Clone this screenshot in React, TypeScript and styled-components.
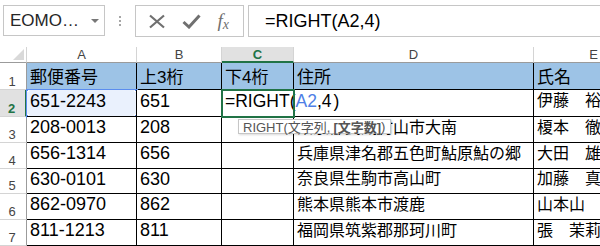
import styled, { createGlobalStyle } from 'styled-components';

const GlobalStyle = createGlobalStyle`
  html, body {
    margin: 0;
    padding: 0;
    background: #fff;
    overflow: hidden;
  }
  body {
    font-family: 'Liberation Sans', 'Noto Sans CJK JP', sans-serif;
  }
`;

type TRow = {
  zip: string;
  head: string;
  address: string;
  name: string;
};

const rows: TRow[] = [
  { zip: '651-2243', head: '651', address: '', name: '伊藤　裕子' },
  { zip: '208-0013', head: '208', address: '東京都武蔵村山市大南', name: '榎本　徹' },
  { zip: '656-1314', head: '656', address: '兵庫県津名郡五色町鮎原鮎の郷', name: '大田　雄一' },
  { zip: '630-0101', head: '630', address: '奈良県生駒市高山町', name: '加藤　真一' },
  { zip: '862-0970', head: '862', address: '熊本県熊本市渡鹿', name: '山本山' },
  { zip: '811-1213', head: '811', address: '福岡県筑紫郡那珂川町', name: '張　茉莉花' },
];

const columns = ['A', 'B', 'C', 'D', 'E'];

const App = () => {
  return (
    <Page>
      <GlobalStyle />
      <Toolbar>
        <NameBox>
          <NameText>EOMO…</NameText>
          <Caret />
        </NameBox>
        <Grip>
          <i />
          <i />
          <i />
        </Grip>
        <FxBox>
          <svg width="18" height="15" viewBox="0 0 18 15">
            <path d="M2 1.5 L16 13.5 M16 1.5 L2 13.5" stroke="#707070" strokeWidth="2.2" fill="none" />
          </svg>
          <svg width="19" height="15" viewBox="0 0 19 15">
            <path d="M1.5 8 L7 13 L17.5 1.5" stroke="#707070" strokeWidth="3" fill="none" strokeLinejoin="miter" />
          </svg>
          <FxLabel>
            f<sub>x</sub>
          </FxLabel>
        </FxBox>
        <FormulaInput>=RIGHT(A2,4)</FormulaInput>
      </Toolbar>

      <Sheet>
        <Corner>
          <svg width="11" height="11" viewBox="0 0 11 11">
            <path d="M11 0 L11 11 L0 11 Z" fill="#d9d9d9" />
          </svg>
        </Corner>
        {columns.map((c) => (
          <ColHead key={c} $active={c === 'C'}>
            {c}
          </ColHead>
        ))}

        <RowHead>1</RowHead>
        <Cell $kind="title">郵便番号</Cell>
        <Cell $kind="title">上3桁</Cell>
        <Cell $kind="title">下4桁</Cell>
        <Cell $kind="title">住所</Cell>
        <Cell $kind="title">氏名</Cell>

        {rows.map((r, i) => {
          const n = i + 2;
          const editing = n === 2;
          return [
            <RowHead key={`h${n}`} $active={editing}>
              {n}
            </RowHead>,
            <Cell key={`a${n}`} $ref={editing}>
              {r.zip}
              {editing && (
                <>
                  <Handle $x="left" $y="top" />
                  <Handle $x="right" $y="top" />
                  <Handle $x="left" $y="bottom" />
                  <Handle $x="right" $y="bottom" />
                </>
              )}
            </Cell>,
            <Cell key={`b${n}`}>{r.head}</Cell>,
            <Cell key={`c${n}`} $edit={editing}>
              {editing && (
                <>
                  =RIGHT(<RefText>A2</RefText>,4
                  <Cursor />)
                  <Tip>
                    RIGHT(文字列, <b>[文字数]</b>)
                  </Tip>
                </>
              )}
            </Cell>,
            <Cell key={`d${n}`} $kind="jp">
              {r.address}
            </Cell>,
            <Cell key={`e${n}`} $kind="jp">
              {r.name}
            </Cell>,
          ];
        })}
      </Sheet>
    </Page>
  );
};

export default App;

const Page = styled.div`
  width: 600px;
  height: 246px;
  overflow: hidden;
  background: #fff;
`;

const Toolbar = styled.div`
  display: flex;
  align-items: flex-start;
  height: 47px;
  box-sizing: border-box;
  padding: 5px 0 0 3px;
`;

const NameBox = styled.div`
  display: flex;
  align-items: center;
  justify-content: space-between;
  width: 102px;
  height: 31px;
  box-sizing: border-box;
  border: 1px solid #c6c6c6;
  padding: 0 5px 0 6px;
`;

const NameText = styled.span`
  font-size: 17px;
  color: #262626;
`;

const Caret = styled.span`
  width: 0;
  height: 0;
  border-left: 4px solid transparent;
  border-right: 4px solid transparent;
  border-top: 4px solid #777;
`;

const Grip = styled.div`
  display: flex;
  flex-direction: column;
  gap: 2px;
  width: 30px;
  align-items: center;
  padding-top: 11px;

  i {
    width: 2px;
    height: 2px;
    background: #a6a6a6;
  }
`;

const FxBox = styled.div`
  display: flex;
  align-items: center;
  justify-content: space-around;
  width: 109px;
  height: 32px;
  box-sizing: border-box;
  border: 1px solid #c6c6c6;
  padding: 0 6px 0 4px;
`;

const FxLabel = styled.span`
  font-family: 'Liberation Serif', serif;
  font-style: italic;
  font-size: 19px;
  color: #6f6f6f;

  sub {
    font-size: 14px;
    vertical-align: -2px;
  }
`;

const FormulaInput = styled.div`
  flex: 1;
  margin-left: 4px;
  height: 32px;
  box-sizing: border-box;
  border-top: 1px solid #c6c6c6;
  border-bottom: 1px solid #c6c6c6;
  border-left: 1px solid #c6c6c6;
  padding-left: 16px;
  display: flex;
  align-items: center;
  font-size: 18px;
  color: #000;
`;

const Sheet = styled.div`
  display: grid;
  grid-template-columns: 27px 110px 85px 72px 240px 120px;
  grid-template-rows: 16px 27px 27px 26px 26px 25px 26px 26px;
`;

const Corner = styled.div`
  box-sizing: border-box;
  border-right: 1px solid #d4d4d4;
  border-bottom: 1px solid #9b9b9b;
  display: flex;
  align-items: flex-end;
  justify-content: flex-end;
  padding: 0 2px 2px 0;
`;

const ColHead = styled.div<{ $active?: boolean }>`
  box-sizing: border-box;
  display: flex;
  align-items: center;
  justify-content: center;
  font-size: 13px;
  color: ${(p) => (p.$active ? '#217346' : '#444')};
  font-weight: ${(p) => (p.$active ? 700 : 400)};
  background: ${(p) => (p.$active ? '#e1e1e1' : '#fff')};
  border-right: 1px solid #d4d4d4;
  border-bottom: ${(p) => (p.$active ? '2px solid #217346' : '1px solid #9b9b9b')};
`;

const RowHead = styled.div<{ $active?: boolean }>`
  box-sizing: border-box;
  display: flex;
  align-items: flex-end;
  justify-content: center;
  padding: 0 2px 0 0;
  font-size: 13px;
  color: ${(p) => (p.$active ? '#217346' : '#444')};
  font-weight: ${(p) => (p.$active ? 700 : 400)};
  background: ${(p) => (p.$active ? '#e1e1e1' : '#fff')};
  border-right: ${(p) => (p.$active ? '2px solid #217346' : '1px solid #9b9b9b')};
  border-bottom: 1px solid #d4d4d4;
`;

type TCell = {
  $kind?: 'title' | 'jp';
  $ref?: boolean;
  $edit?: boolean;
};

const cellFont = (p: TCell) => (p.$kind === 'title' ? '17px' : p.$kind === 'jp' ? '16px' : p.$edit ? '17.5px' : '18px');
const cellPad = (p: TCell) => (p.$kind === 'title' ? '0 0 2px 3px' : p.$kind === 'jp' ? '0 0 8px 3px' : '0 0 4px 3px');
const cellBg = (p: TCell) => (p.$kind === 'title' ? '#9dc3e6' : p.$ref ? '#eaf1fd' : p.$edit ? 'transparent' : '#fff');

const Cell = styled.div<TCell>`
  position: relative;
  box-sizing: border-box;
  display: flex;
  align-items: center;
  padding: ${cellPad};
  white-space: nowrap;
  overflow: ${(p) => (p.$edit ? 'visible' : 'hidden')};
  z-index: ${(p) => (p.$edit ? 2 : 'auto')};
  font-size: ${cellFont};
  color: #000;
  background: ${cellBg};
  border-right: 1px solid #000;
  border-bottom: 1px solid #000;
  outline: ${(p) => (p.$ref ? '1px solid #5b8def' : p.$edit ? '2px solid #217346' : 'none')};
  outline-offset: ${(p) => (p.$edit ? '-1px' : '0')};
`;

const RefText = styled.span`
  color: #4f7fe6;
`;

const Cursor = styled.span`
  display: inline-block;
  width: 1px;
  height: 22px;
  background: #666;
  margin: 0 1px;
`;

const Handle = styled.span<{ $x: 'left' | 'right'; $y: 'top' | 'bottom' }>`
  position: absolute;
  ${(p) => p.$x}: -4px;
  ${(p) => p.$y}: -4px;
  width: 6px;
  height: 6px;
  box-sizing: border-box;
  background: #5b8def;
  border: 1px solid #fff;
  z-index: 3;
`;

const Tip = styled.div`
  position: absolute;
  left: 16px;
  top: 29px;
  width: max-content;
  min-width: 153px;
  height: 15px;
  box-sizing: border-box;
  padding: 0 5px 0 4px;
  display: flex;
  align-items: center;
  font-size: 13px;
  color: #555;
  background: #fff;
  border: 1px solid #c6c6c6;
  box-shadow: 1px 1px 2px rgba(0, 0, 0, 0.15);
  z-index: 4;

  b {
    font-weight: 700;
    margin-left: 3px;
  }
`;
